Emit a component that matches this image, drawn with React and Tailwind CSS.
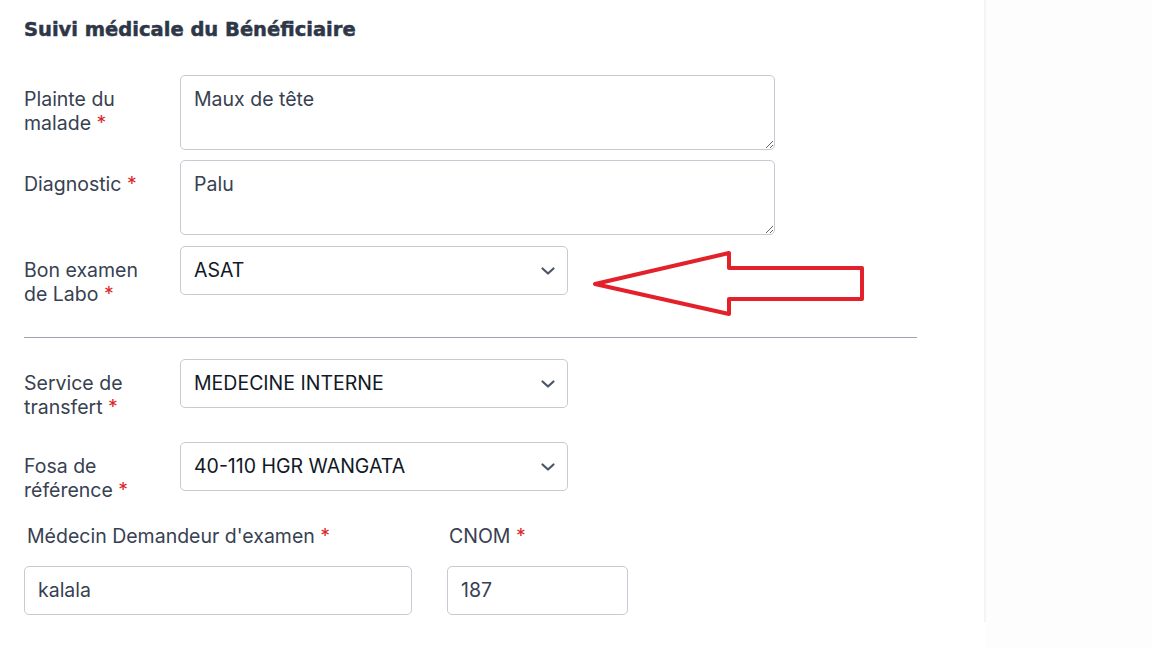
import React from "react";

const Chevron = () => (
  <svg width="16" height="16" viewBox="0 0 16 16" fill="none" className="shrink-0">
    <path d="M2.5 5.5L8 10.5l5.5-5" stroke="#4a5568" strokeWidth="2.2" strokeLinecap="round" strokeLinejoin="round" />
  </svg>
);

const Star = () => <span className="text-[#dc2626]"> *</span>;

const Label = ({ children }) => (
  <div className="w-[156px] shrink-0 pr-4 pt-[12px] text-[19.5px] leading-6 text-[#374151]">{children}</div>
);

const Select = ({ value, w = "w-[388px]" }) => (
  <div className={`${w} h-[49px] rounded-[5px] border border-[#c5cad3] bg-white flex items-center justify-between pl-[13px] pr-[11px] text-[19.5px] text-[#111827]`}>
    <span>{value}</span>
    <Chevron />
  </div>
);

const Area = ({ value }) => (
  <textarea
    readOnly
    defaultValue={value}
    className="w-[595px] h-[75px] rounded-[5px] border border-[#c5cad3] bg-white px-[13px] py-[11px] text-[19.5px] leading-6 text-[#374151] outline-none"
  />
);

export default function App() {
  return (
    <div className="w-[1152px] h-[648px] bg-white flex" style={{ fontFamily: "Inter, 'Noto Sans', sans-serif" }}>
      <div className="relative w-[986px] h-[622px] border-r-2 border-[#f3f4f6] pl-6 pr-[67px] pt-[18px]">
        <h2 className="text-[19.5px] leading-6 font-bold text-[#2d3748]" style={{ fontFamily: "'DejaVu Sans', sans-serif", WebkitTextStroke: "0.5px #2d3748" }}>
          Suivi médicale du Bénéficiaire
        </h2>

        <div className="mt-[33px] flex items-start h-[75px]">
          <Label>Plainte du malade<Star /></Label>
          <Area value="Maux de tête" />
        </div>

        <div className="mt-[10px] flex items-start h-[75px]">
          <Label>Diagnostic<Star /></Label>
          <Area value="Palu" />
        </div>

        <div className="mt-[11px] flex items-start h-[49px]">
          <Label>Bon examen de Labo<Star /></Label>
          <Select value="ASAT" />
        </div>

        <div className="mt-[42px] border-t border-[#9ca3af]" />

        <div className="mt-[21px] flex items-start h-[49px]">
          <Label>Service de transfert<Star /></Label>
          <Select value="MEDECINE INTERNE" />
        </div>

        <div className="mt-[34px] flex items-start h-[49px]">
          <Label>Fosa de référence<Star /></Label>
          <Select value="40-110 HGR WANGATA" />
        </div>

        <div className="mt-[33px] flex gap-[35px]">
          <div className="flex flex-col">
            <div className="pl-[3px] text-[19.5px] leading-6 text-[#374151]">Médecin Demandeur d'examen<Star /></div>
            <div className="mt-[18px] w-[388px] h-[49px] rounded-[5px] border border-[#c5cad3] flex items-center pl-[13px] text-[19.5px] text-[#374151]">kalala</div>
          </div>
          <div className="flex flex-col">
            <div className="pl-[2px] text-[19.5px] leading-6 text-[#374151]">CNOM<Star /></div>
            <div className="mt-[18px] w-[181px] h-[49px] rounded-[5px] border border-[#c5cad3] flex items-center pl-[13px] text-[19.5px] text-[#374151]">187</div>
          </div>
        </div>

        <svg className="absolute left-[590px] top-[248px]" width="280" height="72" viewBox="0 0 280 72">
          <polygon points="5,36 139,5 139,20 272,20 272,51 139,51 139,66" fill="none" stroke="#e3212b" strokeWidth="4" strokeLinejoin="round" />
        </svg>
      </div>
      <div className="flex-1 bg-[#fdfdfd]" />
    </div>
  );
}
